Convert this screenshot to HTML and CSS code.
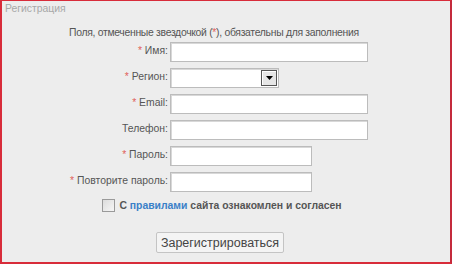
FILE: index.html
```html
<!DOCTYPE html>
<html>
<head>
    <title>Регистрация</title>
    <link rel="stylesheet" href="styles.css">
</head>
<body>
    <div class="panel">
        <div class="legend">Регистрация</div>
        <p class="note">Поля, отмеченные звездочкой (<span class="req">*</span>), обязательны для заполнения</p>
        <form class="reg-form">
            <div class="fields">
                <label><span class="req">*</span> Имя:</label>
                <input type="text" class="wide">

                <label><span class="req">*</span> Регион:</label>
                <div class="select">
                    <span class="select-btn"><svg width="7" height="4" viewBox="0 0 7 4"><path d="M0 0h7L3.5 4z" fill="#000"/></svg></span>
                </div>

                <label><span class="req">*</span> Email:</label>
                <input type="text" class="wide">

                <label>Телефон:</label>
                <input type="text" class="wide">

                <label><span class="req">*</span> Пароль:</label>
                <input type="password" class="short">

                <label><span class="req">*</span> Повторите пароль:</label>
                <input type="password" class="short">
            </div>
            <div class="agree">
                <input type="checkbox" class="check">
                <span>С <a href="#">правилами</a> сайта ознакомлен и согласен</span>
            </div>
            <div class="actions">
                <button type="button">Зарегистрироваться</button>
            </div>
        </form>
    </div>
</body>
</html>
```

FILE: styles.css
```css
html, body {
    margin: 0;
    padding: 0;
    background: #fff;
}
body {
    font-family: Tahoma, "Liberation Sans", Arial, sans-serif;
    font-size: 10.4px;
    color: #555;
}
.panel {
    width: 448px;
    height: 261px;
    border: 2px solid #d82c3a;
    border-top-width: 1px;
    border-right-color: #c42a3c;
    background: #ededed;
    position: relative;
}
.legend {
    padding: 2px 0 0 3px;
    height: 12px;
    line-height: 12px;
    color: #a8a8a8;
    font-size: 10.4px;
}
.note {
    margin: 11px 0 0 67px;
    line-height: 14px;
    letter-spacing: -0.3px;
    color: #555;
}
.req {
    color: #e0605a;
}
.reg-form {
    margin: 0;
}
.fields {
    display: grid;
    grid-template-columns: 166px auto;
    column-gap: 2px;
    row-gap: 6px;
    margin-top: 2px;
    justify-items: start;
}
.fields label {
    justify-self: end;
    line-height: 14px;
    padding-top: 2px;
    color: #555;
}
.fields input,
.select {
    box-sizing: border-box;
    height: 20px;
    margin: 0;
    padding: 0 3px;
    border: 1px solid #bcbcbc;
    box-shadow: inset 1px 1px 0 #d8d8d8;
    background: #fff;
    font: inherit;
}
.wide {
    width: 198px;
}
.short {
    width: 142px;
}
.select {
    width: 109px;
    padding: 1px;
    display: flex;
    justify-content: flex-end;
}
.select-btn {
    box-sizing: border-box;
    width: 16px;
    height: 16px;
    border: 1px solid #555;
    background: #e6e6e6;
    box-shadow: inset 1px 1px 0 #fff;
    display: flex;
    align-items: center;
    justify-content: center;
}
.agree {
    display: flex;
    align-items: center;
    justify-content: center;
    gap: 4px;
    margin-top: 7px;
    padding-right: 8px;
    font-weight: bold;
    color: #555;
}
.agree a {
    color: #3a80c8;
    text-decoration: none;
}
.check {
    appearance: none;
    -webkit-appearance: none;
    box-sizing: border-box;
    width: 13px;
    height: 13px;
    margin: 0;
    border: 1px solid #9a9a9a;
    background: linear-gradient(135deg, #dcdcdc, #f6f6f6);
}
.actions {
    display: flex;
    justify-content: center;
    margin-top: 20px;
    padding-right: 12px;
}
button {
    box-sizing: border-box;
    height: 21px;
    padding: 0 4px;
    border: 1px solid #c4c4c4;
    border-radius: 2px;
    background: #f4f4f4;
    color: #444;
    font-family: Tahoma, "Liberation Sans", Arial, sans-serif;
    font-size: 12.5px;
}
```
